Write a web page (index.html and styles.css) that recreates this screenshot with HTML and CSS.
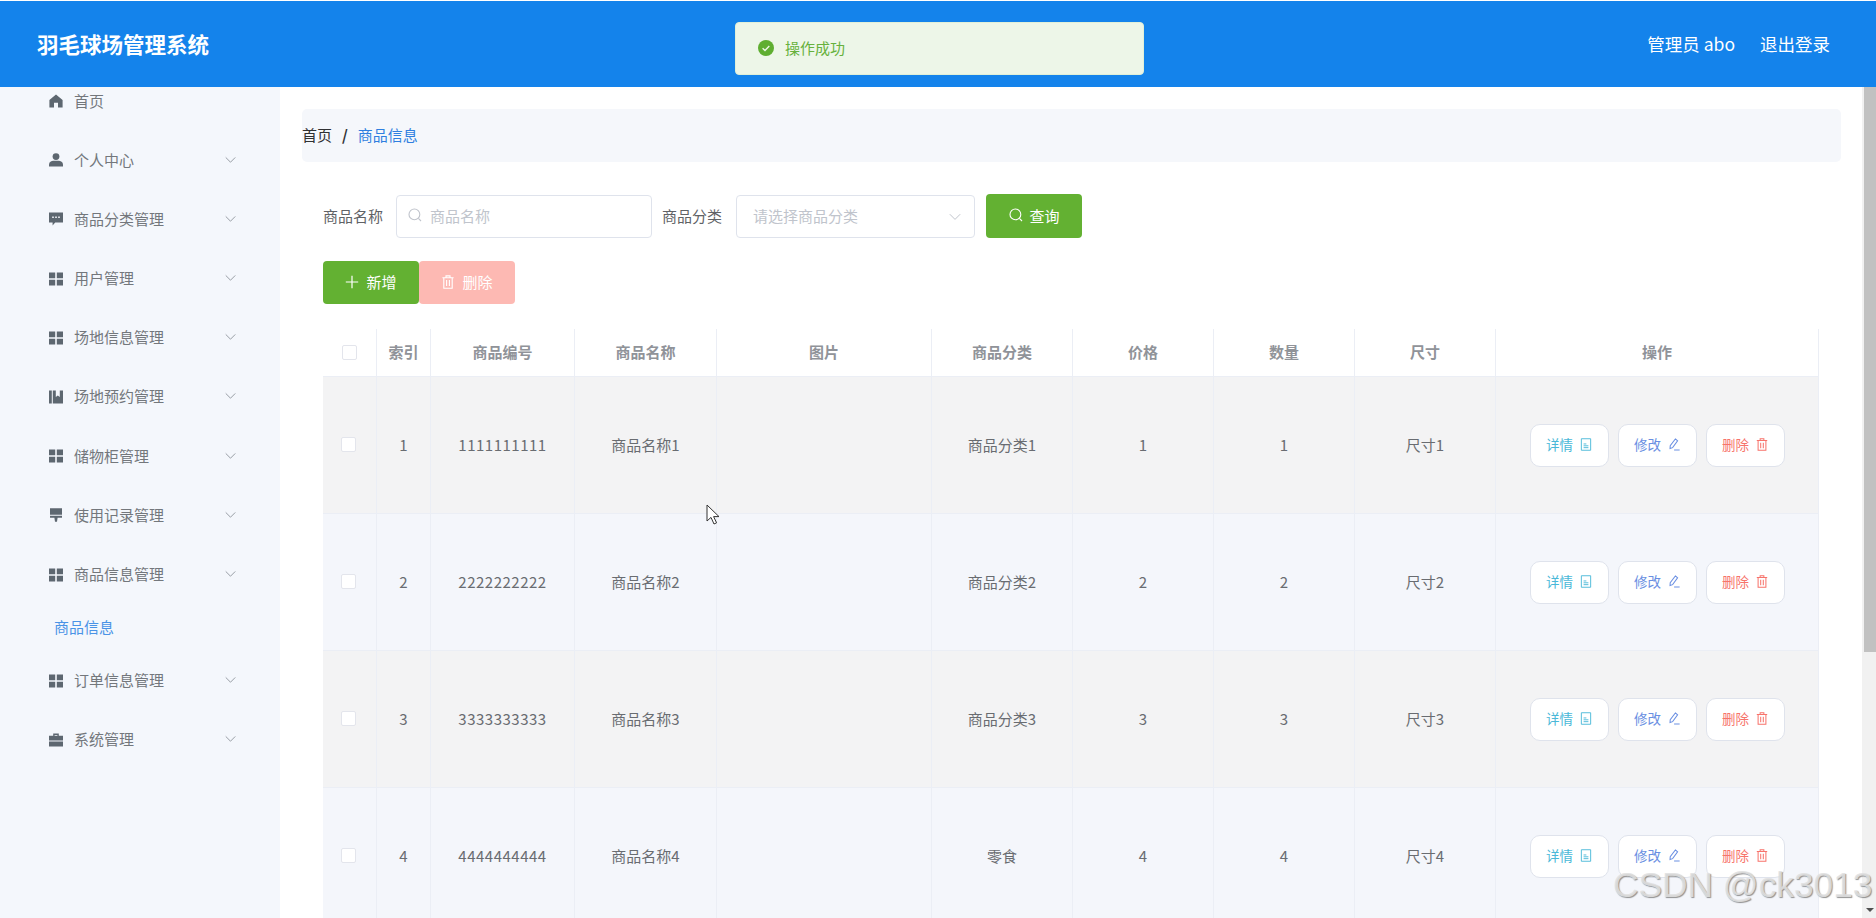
FILE: index.html
```html
<!DOCTYPE html>
<html lang="zh-CN">
<head>
<meta charset="utf-8">
<title>羽毛球场管理系统</title>
<link rel="stylesheet" href="styles.css">
</head>
<body>
<svg class="defs" width="0" height="0" aria-hidden="true">
  <symbol id="i-home" viewBox="0 0 14 14"><path d="M7 .6 13.6 6v7.4H9V8.8H5v4.6H.4V6z"/></symbol>
  <symbol id="i-user" viewBox="0 0 14 14"><circle cx="7" cy="3.6" r="3.4"/><path d="M0 13.6v-2.2C0 9 2.4 7.8 4.4 7.8h5.2c2 0 4.4 1.2 4.4 3.6v2.2z"/></symbol>
  <symbol id="i-chat" viewBox="0 0 14 14"><path fill-rule="evenodd" d="M0 .4h14v10H6.2L3.6 13.4v-3H0zM3.2 4.4v1.6h1.6V4.4zm3 0v1.6h1.6V4.4zm3 0v1.6h1.6V4.4z"/></symbol>
  <symbol id="i-grid" viewBox="0 0 14 14"><path d="M0 .4h6.2v5.8H0zM7.8.4H14v5.8H7.8zM0 7.8h6.2v5.8H0zM7.8 7.8H14v5.8H7.8z"/></symbol>
  <symbol id="i-book" viewBox="0 0 14 14"><path d="M0 .6h2.8v12.8H0zM3.8 .6h3V7l2-1.6 2 1.6V.6H14v12.8H3.8z"/></symbol>
  <symbol id="i-brush" viewBox="0 0 14 14"><path d="M1 .2h12v6.6H1zM1 7.8h12v2H8.6l-.6 4H6l-.6-4H1z"/></symbol>
  <symbol id="i-case" viewBox="0 0 14 14"><path fill-rule="evenodd" d="M4.2 2.8V.6h5.6v2.2H14v4.6H0V2.8zM5.6 2V2.8h2.8V2zM0 8.6h14v4.8H0z"/></symbol>
  <symbol id="i-down" viewBox="0 0 12 8"><path d="M.8 1.2 6 6.4l5.2-5.2" fill="none" stroke="currentColor" stroke-width="1"/></symbol>
  <symbol id="i-search" viewBox="0 0 14 14"><circle cx="6.4" cy="6.4" r="5.4" fill="none" stroke="currentColor" stroke-width="1.1"/><path d="m10.4 10.4 2.6 2.6" fill="none" stroke="currentColor" stroke-width="1.1"/></symbol>
  <symbol id="i-plus" viewBox="0 0 14 14"><path d="M7 .8v12.4M.8 7h12.4" fill="none" stroke="currentColor" stroke-width="1.2"/></symbol>
  <symbol id="i-trash" viewBox="0 0 12 14"><path d="M.4 2.8h11.2M4 2.6V.9h4v1.7M1.8 2.8v10.4h8.4V2.8M4.6 5v6M7.4 5v6" fill="none" stroke="currentColor" stroke-width="1.1"/></symbol>
  <symbol id="i-doc" viewBox="0 0 12 14"><path d="M1 .8h10v12.4H1zM3.4 6.4h3M3.4 8.4h5.2M3.4 10.4h5.2" fill="none" stroke="currentColor" stroke-width="1"/></symbol>
  <symbol id="i-edit" viewBox="0 0 13 14"><path d="M8 1 10.4 3 5 10.4l-2.8 1 .2-3zM6.6 13h6" fill="none" stroke="currentColor" stroke-width="1.1"/></symbol>
</svg>

<header class="topbar">
  <div class="brand">羽毛球场管理系统</div>
  <div class="account">
    <span>管理员 abo</span>
    <span>退出登录</span>
  </div>
</header>

<div class="toast">
  <svg class="toast-icon" viewBox="0 0 16 16"><circle cx="8" cy="8" r="8"/><path d="m4.6 8.2 2.4 2.3 4.3-4.4"/></svg>
  <span>操作成功</span>
</div>

<div class="shell">
  <aside class="sidebar">
    <ul class="menu">
      <li class="menu-item"><svg class="menu-icon"><use href="#i-home"/></svg><span>首页</span></li>
      <li class="menu-item"><svg class="menu-icon"><use href="#i-user"/></svg><span>个人中心</span><svg class="menu-arrow"><use href="#i-down"/></svg></li>
      <li class="menu-item"><svg class="menu-icon"><use href="#i-chat"/></svg><span>商品分类管理</span><svg class="menu-arrow"><use href="#i-down"/></svg></li>
      <li class="menu-item"><svg class="menu-icon"><use href="#i-grid"/></svg><span>用户管理</span><svg class="menu-arrow"><use href="#i-down"/></svg></li>
      <li class="menu-item"><svg class="menu-icon"><use href="#i-grid"/></svg><span>场地信息管理</span><svg class="menu-arrow"><use href="#i-down"/></svg></li>
      <li class="menu-item"><svg class="menu-icon"><use href="#i-book"/></svg><span>场地预约管理</span><svg class="menu-arrow"><use href="#i-down"/></svg></li>
      <li class="menu-item"><svg class="menu-icon"><use href="#i-grid"/></svg><span>储物柜管理</span><svg class="menu-arrow"><use href="#i-down"/></svg></li>
      <li class="menu-item"><svg class="menu-icon"><use href="#i-brush"/></svg><span>使用记录管理</span><svg class="menu-arrow"><use href="#i-down"/></svg></li>
      <li class="menu-item"><svg class="menu-icon"><use href="#i-grid"/></svg><span>商品信息管理</span><svg class="menu-arrow"><use href="#i-down"/></svg></li>
      <li class="menu-sub">商品信息</li>
      <li class="menu-item"><svg class="menu-icon"><use href="#i-grid"/></svg><span>订单信息管理</span><svg class="menu-arrow"><use href="#i-down"/></svg></li>
      <li class="menu-item"><svg class="menu-icon"><use href="#i-case"/></svg><span>系统管理</span><svg class="menu-arrow"><use href="#i-down"/></svg></li>
    </ul>
  </aside>

  <main class="content">
    <nav class="crumbs">
      <span class="crumb-home">首页</span>
      <span class="crumb-sep">/</span>
      <span class="crumb-current">商品信息</span>
    </nav>

    <form class="filters">
      <label class="filter-label">商品名称</label>
      <div class="field field-input">
        <svg class="field-search"><use href="#i-search"/></svg>
        <span>商品名称</span>
      </div>
      <label class="filter-label">商品分类</label>
      <div class="field field-select">
        <span>请选择商品分类</span>
        <svg class="field-arrow"><use href="#i-down"/></svg>
      </div>
      <button type="button" class="btn btn-green btn-query"><svg class="btn-icon"><use href="#i-search"/></svg>查询</button>
    </form>

    <div class="actions">
      <button type="button" class="btn btn-green"><svg class="btn-icon btn-icon-plus"><use href="#i-plus"/></svg>新增</button>
      <button type="button" class="btn btn-pink"><svg class="btn-icon"><use href="#i-trash"/></svg>删除</button>
    </div>

    <table class="grid">
      <colgroup>
        <col class="w-check"><col class="w-index"><col class="w-code"><col class="w-name"><col class="w-image">
        <col class="w-cat"><col class="w-price"><col class="w-qty"><col class="w-size"><col class="w-ops">
      </colgroup>
      <thead>
        <tr>
          <th><span class="check check-head"></span></th>
          <th>索引</th><th>商品编号</th><th>商品名称</th><th>图片</th><th>商品分类</th><th>价格</th><th>数量</th><th>尺寸</th><th>操作</th>
        </tr>
      </thead>
      <tbody>
        <tr>
          <td><span class="check"></span></td><td>1</td><td class="code">1111111111</td><td>商品名称1</td><td></td><td>商品分类1</td><td>1</td><td>1</td><td>尺寸1</td>
          <td><div class="ops">
            <button type="button" class="op op-info">详情<svg class="op-icon"><use href="#i-doc"/></svg></button>
            <button type="button" class="op op-edit">修改<svg class="op-icon"><use href="#i-edit"/></svg></button>
            <button type="button" class="op op-del">删除<svg class="op-icon"><use href="#i-trash"/></svg></button>
          </div></td>
        </tr>
        <tr>
          <td><span class="check"></span></td><td>2</td><td class="code">2222222222</td><td>商品名称2</td><td></td><td>商品分类2</td><td>2</td><td>2</td><td>尺寸2</td>
          <td><div class="ops">
            <button type="button" class="op op-info">详情<svg class="op-icon"><use href="#i-doc"/></svg></button>
            <button type="button" class="op op-edit">修改<svg class="op-icon"><use href="#i-edit"/></svg></button>
            <button type="button" class="op op-del">删除<svg class="op-icon"><use href="#i-trash"/></svg></button>
          </div></td>
        </tr>
        <tr>
          <td><span class="check"></span></td><td>3</td><td class="code">3333333333</td><td>商品名称3</td><td></td><td>商品分类3</td><td>3</td><td>3</td><td>尺寸3</td>
          <td><div class="ops">
            <button type="button" class="op op-info">详情<svg class="op-icon"><use href="#i-doc"/></svg></button>
            <button type="button" class="op op-edit">修改<svg class="op-icon"><use href="#i-edit"/></svg></button>
            <button type="button" class="op op-del">删除<svg class="op-icon"><use href="#i-trash"/></svg></button>
          </div></td>
        </tr>
        <tr>
          <td><span class="check"></span></td><td>4</td><td class="code">4444444444</td><td>商品名称4</td><td></td><td>零食</td><td>4</td><td>4</td><td>尺寸4</td>
          <td><div class="ops">
            <button type="button" class="op op-info">详情<svg class="op-icon"><use href="#i-doc"/></svg></button>
            <button type="button" class="op op-edit">修改<svg class="op-icon"><use href="#i-edit"/></svg></button>
            <button type="button" class="op op-del">删除<svg class="op-icon"><use href="#i-trash"/></svg></button>
          </div></td>
        </tr>
      </tbody>
    </table>
  </main>

  <div class="scrollbar">
    <div class="scroll-thumb"></div>
    <div class="scroll-down"></div>
  </div>
</div>

<svg class="cursor" viewBox="0 0 14 22"><path d="M1 1v16l4-3.6L8 20l2.6-1.2-3-6.2H13z"/></svg>
<div class="watermark">CSDN @ck3013</div>
</body>
</html>
```

FILE: styles.css
```css
* { box-sizing: border-box; }

html, body {
  height: 100%;
  margin: 0;
  overflow: hidden;
}

body {
  display: flex;
  flex-direction: column;
  padding-top: 1px;
  background: #fff;
  color: #606266;
  font-family: "Noto Sans CJK SC", "Noto Sans", sans-serif;
  font-size: 15px;
}

.defs { position: absolute; }

/* top bar */
.topbar {
  flex: none;
  height: 86px;
  display: flex;
  align-items: center;
  justify-content: space-between;
  padding: 0 46px 2px 37px;
  background: #1483eb;
  color: #fff;
}

.brand {
  font-size: 21.5px;
  font-weight: 700;
}

.account {
  display: flex;
  gap: 25px;
  font-size: 17.5px;
}

/* toast */
.toast {
  position: absolute;
  top: 22px;
  left: 735px;
  width: 409px;
  height: 53px;
  display: flex;
  align-items: center;
  gap: 11px;
  padding: 0 0 2px 22px;
  background: #edf6e8;
  border: 1px solid #e1f0d8;
  border-radius: 4px;
  color: #67b13c;
}

.toast-icon {
  width: 16px;
  height: 16px;
}

.toast-icon circle { fill: #5fae31; }

.toast-icon path {
  fill: none;
  stroke: #edf6e8;
  stroke-width: 1.4;
}

/* shell */
.shell {
  flex: 1;
  min-height: 0;
  display: flex;
  position: relative;
}

.sidebar {
  flex: none;
  width: 280px;
  overflow: hidden;
  background: #f4f7fc;
}

.menu {
  list-style: none;
  margin: -15.6px 0 0;
  padding: 0;
}

.menu-item {
  height: 59.2px;
  display: flex;
  align-items: center;
  padding: 0 44px 0 49px;
  color: #73777c;
}

.menu-item span { margin-top: -2px; }

.menu-icon {
  flex: none;
  width: 14px;
  height: 14px;
  margin-right: 11px;
  fill: #5d6770;
}

.menu-arrow {
  flex: none;
  width: 11px;
  height: 8px;
  margin: -1px 0 0 auto;
  color: #8f959c;
}

.menu-sub {
  height: 47px;
  display: flex;
  align-items: center;
  padding: 0 0 2px 54px;
  color: #4a93e6;
}

/* main */
.content {
  flex: none;
  width: 1582px;
  padding: 22px 21px 0 22px;
}

.crumbs {
  height: 53px;
  display: flex;
  align-items: center;
  padding-bottom: 2px;
  background: #f5f7fb;
  border-radius: 5px;
}

.crumb-home { color: #303133; }

.crumb-sep {
  margin: 0 10px;
  color: #303133;
  font-weight: 700;
}

.crumb-current { color: #2f7fe0; }

.filters {
  display: flex;
  align-items: center;
  gap: 13px;
  height: 44px;
  margin: 32px 0 0;
  padding-left: 21px;
}

.filter-label {
  flex: none;
  padding-bottom: 2px;
}

.field {
  height: 43px;
  display: flex;
  align-items: center;
  padding-bottom: 2px;
  background: #fff;
  border: 1px solid #dfe3ec;
  border-radius: 4px;
  color: #c0c4cc;
}

.field-input {
  width: 256px;
  margin-right: -3px;
  padding-left: 11px;
  gap: 8px;
}

.field-select {
  width: 239px;
  margin-left: 1px;
  padding-right: 13px;
  padding-left: 16px;
  justify-content: space-between;
}

.field-search {
  width: 14px;
  height: 14px;
}

.field-arrow {
  width: 12px;
  height: 8px;
  margin-top: 3px;
}

.btn {
  flex: none;
  width: 96px;
  height: 44px;
  display: inline-flex;
  align-items: center;
  justify-content: center;
  gap: 7px;
  padding: 0 0 2px;
  border: 0;
  border-radius: 4px;
  color: #fff;
  font: inherit;
}

.btn-green { background: #63b132; }
.btn-pink { background: #fdb9b3; }
.btn-query { margin-left: -2px; }

.btn-icon {
  width: 14px;
  height: 14px;
}

.actions {
  display: flex;
  height: 43px;
  margin: 23px 0 25px 21px;
}

.actions .btn {
  height: 43px;
}

/* table */
.grid {
  width: 1496px;
  margin-left: 21px;
  table-layout: fixed;
  border-collapse: separate;
  border-spacing: 0;
  color: #696c71;
}

.w-check, .w-index { width: 54px; }
.w-code { width: 144px; }
.w-name { width: 142px; }
.w-image { width: 215px; }
.w-cat, .w-price, .w-qty, .w-size { width: 141px; }
.w-ops { width: 323px; }

.grid th, .grid td {
  padding: 0 0 2px;
  text-align: center;
  border-right: 1px solid #ebeef5;
  border-bottom: 1px solid #ebeef5;
}

.grid th {
  height: 48px;
  color: #909399;
  font-weight: 700;
}

.grid td { height: 137px; }

.grid tbody tr:nth-child(odd) td { background: #f3f3f4; }
.grid tbody tr:nth-child(even) td { background: #f4f6fb; }

.code { letter-spacing: 0.5px; }

.check {
  display: block;
  width: 15px;
  height: 15px;
  margin: 1px 0 0 18px;
  background: #fff;
  border: 1px solid #e3e5ec;
  border-radius: 2px;
}

.check-head { margin: 2px 0 0 19px; }

.ops {
  display: flex;
  justify-content: center;
  gap: 9px;
  margin-bottom: -2px;
}

.op {
  width: 79px;
  height: 43px;
  display: inline-flex;
  align-items: center;
  justify-content: center;
  gap: 7px;
  padding: 0 0 2px;
  background: #fff;
  border: 1px solid #dfe3ec;
  border-radius: 10px;
  font: inherit;
  font-size: 13.5px;
}

.op-icon {
  width: 12px;
  height: 13px;
}

.op-info { color: #4ab8d8; }
.op-edit { color: #6a8fe2; }
.op-del { color: #f7736b; }

/* scrollbar */
.scrollbar {
  position: absolute;
  top: 0;
  right: 0;
  bottom: 0;
  width: 14px;
  background: #f1f1f1;
}

.scroll-thumb {
  position: absolute;
  top: 0;
  right: 0;
  width: 12px;
  height: 565px;
  background: #c1c1c1;
}

.scroll-down {
  position: absolute;
  right: 2px;
  bottom: 6px;
  border: 4px solid transparent;
  border-top: 4px solid #505050;
  border-bottom: 0;
}

/* overlays */
.cursor {
  position: absolute;
  top: 504px;
  left: 706px;
  width: 14px;
  height: 22px;
  fill: #fff;
  stroke: #333;
  stroke-width: 1;
}

.watermark {
  position: absolute;
  top: 865px;
  left: 1613px;
  color: rgba(225, 225, 225, 0.9);
  font-family: "Liberation Sans", sans-serif;
  font-size: 35.3px;
  line-height: 40px;
  white-space: nowrap;
  text-shadow: 1px 1px 1px rgba(120, 120, 120, 0.8);
}
```
